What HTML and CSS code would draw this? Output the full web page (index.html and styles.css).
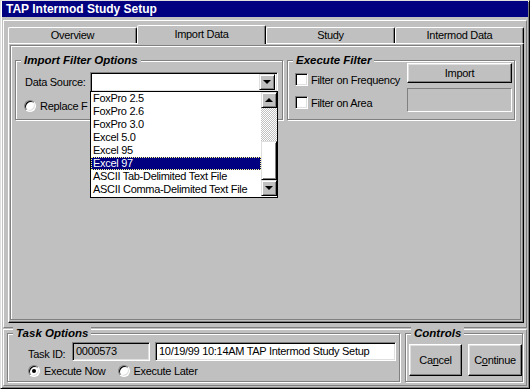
FILE: index.html
```html
<!DOCTYPE html>
<html lang="en">
<head>
<meta charset="UTF-8">
<title>TAP Intermod Study Setup</title>
<link rel="stylesheet" href="styles.css">
</head>
<body>

<div class="window">
  <div class="titlebar">TAP Intermod Study Setup</div>

  <div class="panel main">
    <div class="tabs">
      <div class="tab">Overview</div>
      <div class="tab active">Import Data</div>
      <div class="tab">Study</div>
      <div class="tab">Intermod Data</div>
    </div>

    <div class="page">
      <div class="page-frame">
        <div class="group import-group">
          <div class="legend">Import Filter Options</div>
          <div class="field-row">
            <span class="label">Data Source:</span>
            <div class="combo">
              <div class="combo-value"></div>
              <div class="btn-small"><span class="arrow down"></span></div>

              <!-- open drop-down list -->
              <div class="dropdown">
                <div class="items">
                  <div class="item">FoxPro 2.5</div>
                  <div class="item">FoxPro 2.6</div>
                  <div class="item">FoxPro 3.0</div>
                  <div class="item">Excel 5.0</div>
                  <div class="item">Excel 95</div>
                  <div class="item selected">Excel 97</div>
                  <div class="item">ASCII Tab-Delimited Text File</div>
                  <div class="item">ASCII Comma-Delimited Text File</div>
                </div>
                <div class="scrollbar">
                  <div class="btn-small"><span class="arrow up"></span></div>
                  <div class="track"></div>
                  <div class="thumb"></div>
                  <div class="btn-small"><span class="arrow down"></span></div>
                </div>
              </div>
            </div>
          </div>
          <div class="option">
            <span class="radio"></span>
            <span>Replace F</span>
          </div>
        </div>

        <div class="group exec-group">
          <div class="legend">Execute Filter</div>
          <div class="checks">
            <div class="option"><span class="checkbox"></span><span>Filter on Frequency</span></div>
            <div class="option"><span class="checkbox"></span><span>Filter on Area</span></div>
          </div>
          <div class="actions">
            <div class="button import-btn">Import</div>
            <div class="status-box"></div>
          </div>
        </div>
      </div>
    </div>
  </div>

  <div class="panel footer">
    <div class="group task-group">
      <div class="legend">Task Options</div>
      <div class="field-row task-row">
        <span class="label">Task ID:</span>
        <div class="textbox grey task-id">0000573</div>
        <div class="textbox task-name">10/19/99 10:14AM TAP Intermod Study Setup</div>
      </div>
      <div class="radio-row">
        <div class="option"><span class="radio checked"></span><span>Execute Now</span></div>
        <div class="option"><span class="radio"></span><span>Execute Later</span></div>
      </div>
    </div>

    <div class="group controls-group">
      <div class="legend">Controls</div>
      <div class="button cancel-btn">Ca<u>n</u>cel</div>
      <div class="button continue-btn">C<u>o</u>ntinue</div>
    </div>
  </div>
</div>

</body>
</html>
```

FILE: styles.css
```css
* {
  box-sizing: border-box;
}
body {
  margin: 0;
  background-color: #c0c0c0;
  font-family: "Liberation Sans", Arial, sans-serif;
  font-size: 11px;
  letter-spacing: -0.3px;
  color: #000;
}
.window {
  width: 530px;
  height: 389px;
  padding: 1px;
  border: 1px solid;
  border-color: #dfdfdf #000 #000 #dfdfdf;
  box-shadow: inset 1px 1px 0 #fff, inset -1px -1px 0 #808080;
  background-color: #c0c0c0;
}
.titlebar {
  height: 16px;
  margin-top: -1px;
  padding-left: 4px;
  background-color: #000080;
  color: #fff;
  font-size: 12px;
  font-weight: bold;
  letter-spacing: 0;
  line-height: 16px;
}

/* raised panels */
.panel {
  margin: 0 1px;
  border: 1px solid;
  border-color: #fff #808080 #808080 #fff;
}
.main {
  margin-top: 3px;
  height: 308px;
  padding: 4px 0 0 4px;
}
.footer {
  margin-top: 1px;
  height: 57px;
  padding: 3px 0 0 3px;
  display: flex;
  gap: 5px;
}

/* tabs */
.tabs {
  display: flex;
  height: 18px;
  position: relative;
  z-index: 1;
}
.tab {
  width: 129px;
  height: 16px;
  margin-top: 2px;
  border: 1px solid;
  border-bottom: none;
  border-color: #fff #000 transparent #fff;
  border-radius: 2px 2px 0 0;
  box-shadow: inset -1px 0 0 #808080;
  text-align: center;
  line-height: 15px;
}
.tab.active {
  height: 19px;
  margin-top: 0;
  background-color: #c0c0c0;
  line-height: 17px;
}
.page {
  width: 516px;
  height: 280px;
  padding: 1px 2px 2px 1px;
  border: 1px solid;
  border-color: #fff #000 #000 #fff;
  box-shadow: inset -1px -1px 0 #808080;
}
.page-frame {
  height: 100%;
  display: flex;
  gap: 4px;
  padding: 14px 0 0 4px;
  border: 1px solid #808080;
  box-shadow: inset 1px 1px 0 #fff;
}

/* group boxes */
.group {
  position: relative;
  border: 1px solid #808080;
  box-shadow: inset 1px 1px 0 #fff, 1px 1px 0 #fff;
}
.legend {
  position: absolute;
  top: -8px;
  left: 5px;
  padding: 0 3px;
  background-color: #c0c0c0;
  font-size: 11.5px;
  font-weight: bold;
  font-style: italic;
  letter-spacing: 0;
  line-height: 14px;
}
.import-group {
  width: 268px;
  height: 60px;
  padding: 11px 0 0 9px;
}
.exec-group {
  width: 228px;
  height: 60px;
  display: flex;
  padding: 2px 0 0 7px;
}
.task-group {
  width: 393px;
  height: 49px;
  padding: 8px 0 0 20px;
}
.controls-group {
  width: 118px;
  height: 49px;
  display: flex;
  gap: 6px;
  padding: 10px 0 0 3px;
}

.field-row {
  display: flex;
  align-items: center;
}
.label {
  width: 65px;
}
.option {
  display: flex;
  align-items: center;
  gap: 4px;
}
.import-group .option {
  margin-top: 8px;
  margin-left: -1px;
}

/* combo box */
.combo {
  position: relative;
  width: 188px;
  height: 20px;
  display: flex;
  padding: 2px;
  border: 1px solid;
  border-color: #808080 #fff #fff #808080;
  box-shadow: inset 1px 1px 0 #000, inset -1px -1px 0 #dfdfdf;
  background-color: #fff;
}
.combo-value {
  flex: 1;
}
.btn-small {
  width: 16px;
  height: 16px;
  display: flex;
  align-items: center;
  justify-content: center;
  border: 1px solid;
  border-color: #dfdfdf #000 #000 #dfdfdf;
  box-shadow: inset 1px 1px 0 #fff, inset -1px -1px 0 #808080;
  background-color: #c0c0c0;
}
.combo > .btn-small {
  height: 16px;
  margin-top: -1px;
}
.arrow {
  width: 0;
  height: 0;
  border-left: 4px solid transparent;
  border-right: 4px solid transparent;
}
.arrow.down {
  border-top: 4px solid #000;
}
.arrow.up {
  border-bottom: 4px solid #000;
}

/* open drop-down list */
.dropdown {
  position: absolute;
  top: 18px;
  left: -1px;
  width: 188px;
  height: 107px;
  display: flex;
  border: 1px solid #000;
  background-color: #fff;
}
.items {
  flex: 1;
}
.item {
  height: 13px;
  padding-left: 2px;
  line-height: 13px;
  white-space: nowrap;
}
.item.selected {
  background-color: #000080;
  color: #fff;
  outline: 1px dotted #ffff80;
  outline-offset: -1px;
}
.scrollbar {
  width: 16px;
  display: flex;
  flex-direction: column;
}
.track {
  height: 33px;
  background: repeating-conic-gradient(#fff 0 25%, #c0c0c0 0 50%) 0 0 / 2px 2px;
}
.thumb {
  height: 39px;
  border: 1px solid;
  border-color: #dfdfdf #000 #000 #dfdfdf;
  box-shadow: inset 1px 1px 0 #fff, inset -1px -1px 0 #808080;
}

/* radio and checkbox */
.radio {
  width: 12px;
  height: 12px;
  display: flex;
  align-items: center;
  justify-content: center;
  border: 1px solid;
  border-color: #808080 #fff #fff #808080;
  border-radius: 50%;
  box-shadow: inset 1px 1px 0 #000, inset -1px -1px 0 #dfdfdf;
  background-color: #fff;
}
.radio.checked::after {
  content: "";
  width: 4px;
  height: 4px;
  border-radius: 50%;
  background-color: #000;
}
.checkbox {
  width: 13px;
  height: 13px;
  border: 1px solid;
  border-color: #808080 #fff #fff #808080;
  box-shadow: inset 1px 1px 0 #000, inset -1px -1px 0 #dfdfdf;
  background-color: #fff;
}
.checks {
  width: 112px;
  padding-top: 10px;
  display: flex;
  flex-direction: column;
  gap: 10px;
}
.checks .option {
  gap: 3px;
}
.actions {
  display: flex;
  flex-direction: column;
  gap: 5px;
}

/* buttons */
.button {
  display: flex;
  align-items: center;
  justify-content: center;
  border: 1px solid;
  border-color: #fff #000 #000 #fff;
  box-shadow: inset -1px -1px 0 #808080, inset 1px 1px 0 #dfdfdf;
}
.import-btn {
  width: 105px;
  height: 20px;
  padding-bottom: 1px;
}
.status-box {
  width: 105px;
  height: 24px;
  border: 1px solid;
  border-color: #808080 #fff #fff #808080;
}
.cancel-btn {
  width: 53px;
  height: 32px;
}
.continue-btn {
  width: 54px;
  height: 32px;
}

/* task options */
.task-row .label {
  width: 44px;
  padding-top: 4px;
}
.textbox {
  height: 19px;
  padding: 1px 3px 0;
  border: 1px solid;
  border-color: #808080 #fff #fff #808080;
  box-shadow: inset 1px 1px 0 #000, inset -1px -1px 0 #dfdfdf;
  background-color: #fff;
  line-height: 15px;
  white-space: nowrap;
}
.textbox.grey {
  background-color: #c0c0c0;
}
.task-id {
  width: 78px;
  margin-right: 5px;
}
.task-name {
  width: 241px;
}
.radio-row {
  display: flex;
  gap: 12px;
  margin-top: 4px;
}
```
